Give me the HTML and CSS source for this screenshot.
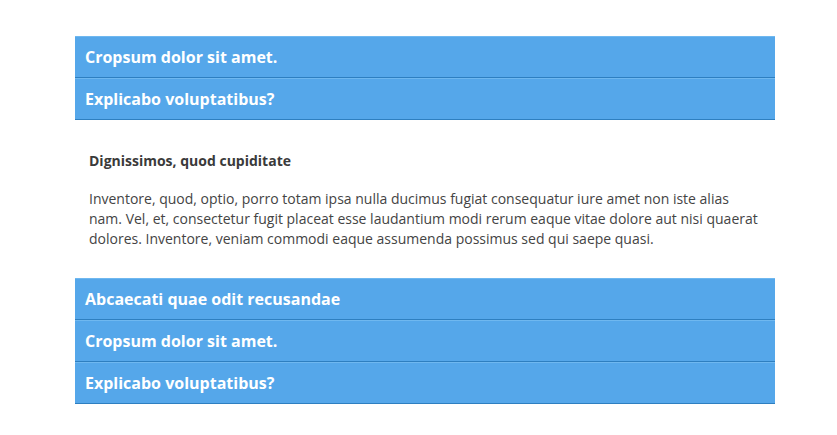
FILE: index.html
```html
<!DOCTYPE html>
<html>
<head>
<meta charset="utf-8">
<link rel="stylesheet" href="styles.css">
</head>
<body>
<div class="accordion">
  <div class="acc-head">Cropsum dolor sit amet.</div>
  <div class="acc-head">Explicabo voluptatibus?</div>
  <div class="acc-body">
    <h4 class="acc-title">Dignissimos, quod cupiditate</h4>
    <p class="acc-text">Inventore, quod, optio, porro totam ipsa nulla ducimus fugiat consequatur iure amet non iste alias nam. Vel, et, consectetur fugit placeat esse laudantium modi rerum eaque vitae dolore aut nisi quaerat dolores. Inventore, veniam commodi eaque assumenda possimus sed qui saepe quasi.</p>
  </div>
  <div class="acc-head">Abcaecati quae odit recusandae</div>
  <div class="acc-head">Cropsum dolor sit amet.</div>
  <div class="acc-head">Explicabo voluptatibus?</div>
</div>
</body>
</html>
```
FILE: styles.css
```css
html, body {
  margin: 0;
  padding: 0;
  background: #ffffff;
}
body {
  font-family: "Open Sans", "Liberation Sans", sans-serif;
  padding-top: 36px;
}
.accordion {
  width: 700px;
  margin-left: 75px;
  display: flex;
  flex-direction: column;
}
.acc-head {
  box-sizing: border-box;
  height: 42px;
  display: flex;
  align-items: center;
  padding-left: 10px;
  background: #55a7ea;
  border-top: 1px solid #6fb8f0;
  border-bottom: 1px solid #2e7fc0;
  color: #ffffff;
  font-weight: 700;
  font-size: 16px;
}
.acc-body {
  padding: 31px 14px 29px 14px;
}
.acc-title {
  margin: 0 0 18px 0;
  font-size: 14px;
  line-height: 20px;
  font-weight: 700;
  color: #3a3a3a;
}
.acc-text {
  margin: 0;
  font-size: 14px;
  line-height: 20px;
  color: #444444;
}
```
